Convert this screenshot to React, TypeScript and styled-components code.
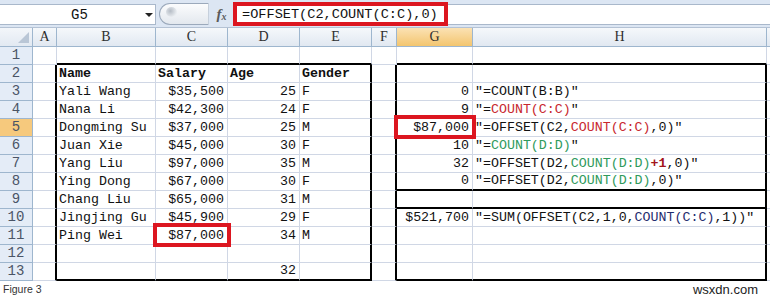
import React from 'react';
import styled, {createGlobalStyle, css} from 'styled-components';

const GlobalStyle = createGlobalStyle`
    html, body {
        margin: 0;
        padding: 0;
        background: #ffffff;
        overflow: hidden;
    }
`;

const GRID = '#d0d7e5';
const HEAD_LINE = '#9eb6ce';
const MONO = '"Liberation Mono", "DejaVu Sans Mono", monospace';

type Part = {text: string, color?: string, bold?: boolean};
type Row = {[col: string]: {value: React.ReactNode, align?: 'left' | 'right', bold?: boolean, marked?: boolean}};

const COLUMNS = ['A', 'B', 'C', 'D', 'E', 'F', 'G', 'H', 'I'];
const Q = '\u2033';
const RED = '#c8282e';
const GREEN = '#2f9a5c';
const NAVY = '#1f2c6e';

const formula = (parts: Part[]) =>
    <>
        {parts.map((p: Part, i: number) =>
            <Frag key={i} $color={p.color} $bold={p.bold}>{p.text}</Frag>
        )}
    </>;

const people = [
    ['Yali Wang', '$35,500', '25', 'F'],
    ['Nana Li', '$42,300', '24', 'F'],
    ['Dongming Su', '$37,000', '25', 'M'],
    ['Juan Xie', '$45,000', '30', 'F'],
    ['Yang Liu', '$97,000', '35', 'M'],
    ['Ying Dong', '$67,000', '30', 'F'],
    ['Chang Liu', '$65,000', '31', 'M'],
    ['Jingjing Gu', '$45,900', '29', 'F'],
    ['Ping Wei', '$87,000', '34', 'M'],
];

const lookups: {[row: number]: [string, Part[]]} = {
    3: ['0', [{text: `${Q}=COUNT(B:B)${Q}`}]],
    4: ['9', [{text: `${Q}=`}, {text: 'COUNT(C:C)', color: RED}, {text: Q}]],
    5: ['$87,000', [{text: `${Q}=OFFSET(C2,`}, {text: 'COUNT(C:C)', color: RED}, {text: `,0)${Q}`}]],
    6: ['10', [{text: `${Q}=`}, {text: 'COUNT(D:D)', color: GREEN}, {text: Q}]],
    7: ['32', [{text: `${Q}=OFFSET(D2,`}, {text: 'COUNT(D:D)', color: GREEN}, {text: '+1', color: '#a3161b', bold: true}, {text: `,0)${Q}`}]],
    8: ['0', [{text: `${Q}=OFFSET(D2,`}, {text: 'COUNT(D:D)', color: GREEN}, {text: `,0)${Q}`}]],
    10: ['$521,700', [{text: `${Q}=SUM(OFFSET(C2,1,0,`}, {text: 'COUNT(C:C)', color: NAVY}, {text: `,1))${Q}`}]],
};

function buildRows(): Row[] {
    const rows: Row[] = [];
    for (let r = 1; r <= 13; r++) {
        const row: Row = {};
        if (r === 2) {
            row.B = {value: 'Name', bold: true};
            row.C = {value: 'Salary', bold: true};
            row.D = {value: 'Age', bold: true};
            row.E = {value: 'Gender', bold: true};
        }
        const p = people[r - 3];
        if (p) {
            row.B = {value: p[0]};
            row.C = {value: p[1], align: 'right', marked: r === 11};
            row.D = {value: p[2], align: 'right'};
            row.E = {value: p[3]};
        }
        if (r === 13) row.D = {value: '32', align: 'right'};
        const l = lookups[r];
        if (l) {
            row.G = {value: l[0], align: 'right', marked: r === 5};
            row.H = {value: formula(l[1])};
        }
        rows.push(row);
    }
    return rows;
}

// black outline of the two tables: which cell edges are drawn black
function edgeRight(col: string, r: number) {
    if (r < 2) return false;
    return col === 'A' || col === 'E' || col === 'F' || col === 'H';
}

function edgeBottom(col: string, r: number) {
    const left = ['B', 'C', 'D', 'E'].includes(col);
    const right = ['G', 'H'].includes(col);
    if (r === 1 || r === 13) return left || right;
    if (r === 8 || r === 9) return right;
    return false;
}

export default function App() {
    const rows = buildRows();

    return (
        <Page>
            <GlobalStyle/>
            <FormulaBar>
                <NameBox>
                    <NameText>G5</NameText>
                    <DropArrow/>
                </NameBox>
                <PillButton><PillShine/></PillButton>
                <FxLabel>f<sub>x</sub></FxLabel>
                <FormulaInput>
                    <FormulaText>=OFFSET(C2,COUNT(C:C),0)</FormulaText>
                    <FormulaMark/>
                </FormulaInput>
            </FormulaBar>

            <Sheet>
                <Corner><CornerTriangle/></Corner>
                {COLUMNS.map((c: string) =>
                    <ColHead key={c} $active={c === 'G'}>{c === 'I' ? '' : c}</ColHead>
                )}
                {rows.map((row: Row, index: number) => {
                    const r = index + 1;
                    return (
                        <React.Fragment key={r}>
                            <RowHead $active={r === 5}>{r}</RowHead>
                            {COLUMNS.map((c: string) => {
                                const cell = row[c];
                                return (
                                    <Cell
                                        key={c}
                                        $align={cell?.align}
                                        $bold={cell?.bold}
                                        $edgeR={edgeRight(c, r)}
                                        $edgeB={edgeBottom(c, r)}
                                    >
                                        {cell?.value}
                                        {cell?.marked && <CellMark/>}
                                    </Cell>
                                );
                            })}
                        </React.Fragment>
                    );
                })}
            </Sheet>

            <Footer>
                <Caption>Figure 3</Caption>
                <Watermark>wsxdn.com</Watermark>
            </Footer>
        </Page>
    );
}

const Page = styled.div`
    width: 770px;
    height: 297px;
    overflow: hidden;
    background: #ffffff;
`;

const FormulaBar = styled.div`
    display: flex;
    height: 28px;
    box-sizing: border-box;
    padding: 4px 0 2px 0;
    background: #dce6f3;
    border-bottom: 1px solid #b4c2d4;
`;

const NameBox = styled.div`
    position: relative;
    display: flex;
    align-items: center;
    width: 156px;
    box-sizing: border-box;
    background: #ffffff;
    border: 1px solid #a9b8cb;
    border-left: none;
`;

const NameText = styled.span`
    flex: 1;
    text-align: center;
    font-family: ${MONO};
    font-size: 14px;
    color: #111;
    padding-left: 14px;
`;

const DropArrow = styled.span`
    width: 0;
    height: 0;
    margin-right: 2px;
    border-left: 4px solid transparent;
    border-right: 4px solid transparent;
    border-top: 4px solid #222;
`;

const PillButton = styled.div`
    position: relative;
    width: 50px;
    margin-left: 3px;
    margin-top: -1px;
    box-sizing: border-box;
    border: 1px solid #9ba9bb;
    border-right-color: #c6d0dc;
    border-radius: 12px 0 0 12px;
    background: linear-gradient(#fbfcfd, #e3e8ee);
`;

const PillShine = styled.span`
    position: absolute;
    left: 6px;
    top: 3px;
    width: 11px;
    height: 10px;
    border-radius: 50%;
    background: radial-gradient(circle at 40% 40%, #b5bcc5, #e9edf1 70%);
`;

const FxLabel = styled.div`
    width: 25px;
    text-align: center;
    font-family: "Liberation Serif", serif;
    font-style: italic;
    font-weight: bold;
    font-size: 15px;
    line-height: 20px;
    color: #5a5a5a;

    sub {
        font-size: 10px;
        vertical-align: -1px;
    }
`;

const FormulaInput = styled.div`
    position: relative;
    flex: 1;
    box-sizing: border-box;
    background: #ffffff;
    border: 1px solid #a9b8cb;
    border-right: none;
    display: flex;
    align-items: center;
`;

const FormulaText = styled.span`
    padding-left: 7px;
    font-family: ${MONO};
    font-size: 13.6px;
    color: #111;
`;

const FormulaMark = styled.span`
    position: absolute;
    left: -2px;
    top: -3px;
    width: 215px;
    height: 24px;
    box-sizing: border-box;
    border: 4px solid #dc1620;
`;

const Sheet = styled.div`
    display: grid;
    grid-template-columns: 33px 24px 99px 72px 72px 72px 25px 76px 294px 1fr;
    grid-template-rows: 19px repeat(13, 18px);
`;

const Corner = styled.div`
    position: relative;
    background: linear-gradient(#f3f6fa, #e2e9f2);
    border-right: 1px solid ${HEAD_LINE};
    border-bottom: 1px solid ${HEAD_LINE};
`;

const CornerTriangle = styled.span`
    position: absolute;
    right: 3px;
    bottom: 3px;
    width: 0;
    height: 0;
    border-left: 11px solid transparent;
    border-bottom: 11px solid #b9c6d6;
`;

const ColHead = styled.div<{$active?: boolean}>`
    box-sizing: border-box;
    text-align: center;
    font-family: "Liberation Serif", serif;
    font-size: 14px;
    line-height: 18px;
    color: #2e2e2e;
    background: ${p => p.$active ? 'linear-gradient(#fbe2b4, #f3c56f)' : 'linear-gradient(#f5f8fb, #e1e8f1)'};
    border-right: 1px solid ${HEAD_LINE};
    border-bottom: 1px solid ${HEAD_LINE};
`;

const RowHead = styled.div<{$active?: boolean}>`
    box-sizing: border-box;
    text-align: center;
    font-family: ${MONO};
    font-size: 14px;
    line-height: 17px;
    color: #4a5466;
    background: ${p => p.$active ? '#f6c97d' : '#e4ecf7'};
    border-right: 1px solid ${HEAD_LINE};
    border-bottom: 1px solid ${HEAD_LINE};
`;

const Cell = styled.div<{$align?: string, $bold?: boolean, $edgeR?: boolean, $edgeB?: boolean}>`
    position: relative;
    box-sizing: border-box;
    padding: 0 3px 0 2px;
    white-space: nowrap;
    font-family: ${MONO};
    font-size: 13.3px;
    line-height: 17px;
    color: #111;
    text-align: ${p => p.$align || 'left'};
    font-weight: ${p => p.$bold ? 'bold' : 'normal'};
    border-right: 1px solid ${GRID};
    border-bottom: 1px solid ${GRID};
    ${p => p.$edgeR && css`
        border-right: 2px solid #000;
    `}
    ${p => p.$edgeB && css`
        border-bottom: 2px solid #000;
        line-height: 16px;
    `}
`;

const CellMark = styled.span`
    position: absolute;
    left: -3px;
    right: -4px;
    top: -4px;
    bottom: -3px;
    border: 4px solid #dc1620;
    z-index: 2;
`;

const Frag = styled.span<{$color?: string, $bold?: boolean}>`
    color: ${p => p.$color || 'inherit'};
    font-weight: ${p => p.$bold ? 'bold' : 'normal'};
`;

const Footer = styled.div`
    display: flex;
    justify-content: space-between;
    align-items: center;
    height: 16px;
    font-family: "Liberation Sans", Arial, sans-serif;
`;

const Caption = styled.span`
    padding-left: 3px;
    font-size: 10.5px;
    color: #333;
`;

const Watermark = styled.span`
    padding-right: 12px;
    font-size: 13px;
    color: #222;
`;
